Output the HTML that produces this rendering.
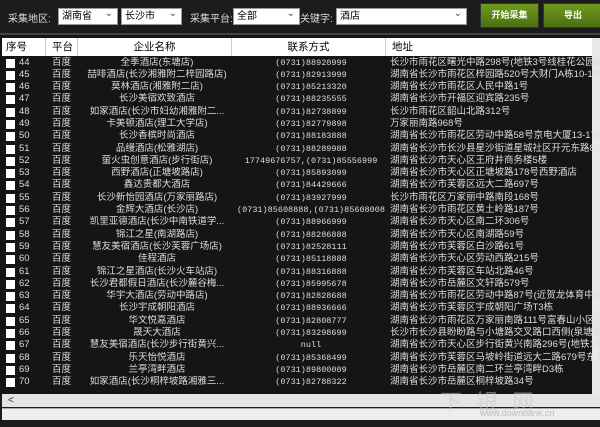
<!DOCTYPE html>
<html><head><meta charset="utf-8"><style>
*{margin:0;padding:0;box-sizing:border-box}
body{width:600px;height:427px;background:#1c1c1c;font-family:"Liberation Sans","Noto Sans CJK SC",sans-serif;font-size:10px;color:#ddd;position:relative;overflow:hidden}
.a{position:absolute}
.sel{background:#fff;color:#000;border:1px solid #999;height:17px;top:8px;font-size:10px;padding:1px 3px;line-height:14px}
.sel:after{content:"⌄";position:absolute;right:4px;top:-2px;color:#555;font-size:10px}
.lbl{top:10px;font-size:10px;color:#ddd}
.btn{top:3px;height:25px;background:linear-gradient(#6f9a1e,#4a7010);border:1px solid #333;color:#fff;font-size:9px;text-align:center;line-height:23px;font-weight:bold}
.hdr{top:38px;left:2px;width:590px;height:18px;background:#fff;color:#000;font-size:10.5px}
.hdr div{position:absolute;top:0;height:18px;line-height:18px;border-right:1px solid #ccc}
.rows{top:56.5px;left:2px;width:590px}
.r{height:12.3px;line-height:12.3px;position:relative;font-size:9.5px;white-space:nowrap}
.r span{position:absolute;top:0}
.cb{left:4px;top:2px!important;width:9px;height:9px;background:#fff}
.n{left:17px}.p{left:50px}.nm{left:78px;width:154px;text-align:center;overflow:hidden}
.ph{left:232px;width:154px;text-align:center;font-family:"Liberation Mono",monospace;font-size:8.5px}
.ad{left:388px}
</style></head><body>
<div class="a" style="left:0;top:33px;width:600px;height:2px;background:#444"></div>
<div class="a lbl" style="left:8px">采集地区:</div>
<div class="a sel" style="left:58px;width:60px">湖南省</div>
<div class="a sel" style="left:121px;width:61px">长沙市</div>
<div class="a lbl" style="left:190px">采集平台:</div>
<div class="a sel" style="left:233px;width:67px">全部</div>
<div class="a lbl" style="left:300px">关键字:</div>
<div class="a sel" style="left:336px;width:131px">酒店</div>
<div class="a btn" style="left:480px;width:59px">开始采集</div>
<div class="a btn" style="left:543px;width:60px">导出</div>
<div class="a" style="left:0;top:35px;width:600px;height:360px;background:#151515"></div>
<div class="a hdr">
<div style="left:0;width:44px;padding-left:4px">序号</div>
<div style="left:44px;width:32px;padding-left:6px">平台</div>
<div style="left:76px;width:154px;text-align:center">企业名称</div>
<div style="left:230px;width:154px;text-align:center">联系方式</div>
<div style="left:384px;width:206px;padding-left:6px;border:none">地址</div>
</div>
<div class="a" style="left:592px;top:38px;width:8px;height:357px;background:#e8e8e8"></div>
<div class="a rows">
<div class="r"><span class="cb"></span><span class="n">44</span><span class="p">百度</span><span class="nm">全季酒店(东塘店)</span><span class="ph">(0731)88920999</span><span class="ad">长沙市雨花区曙光中路298号(地铁3号线桂花公园站</span></div>
<div class="r"><span class="cb"></span><span class="n">45</span><span class="p">百度</span><span class="nm">喆啡酒店(长沙湘雅附二梓园路店)</span><span class="ph">(0731)82913999</span><span class="ad">湖南省长沙市雨花区梓园路520号大财门A栋10-14层</span></div>
<div class="r"><span class="cb"></span><span class="n">46</span><span class="p">百度</span><span class="nm">莫林酒店(湘雅附二店)</span><span class="ph">(0731)85213320</span><span class="ad">湖南省长沙市雨花区人民中路1号</span></div>
<div class="r"><span class="cb"></span><span class="n">47</span><span class="p">百度</span><span class="nm">长沙美宿欢致酒店</span><span class="ph">(0731)88235555</span><span class="ad">湖南省长沙市开福区迎宾路235号</span></div>
<div class="r"><span class="cb"></span><span class="n">48</span><span class="p">百度</span><span class="nm">如家酒店(长沙市妇幼湘雅附二...</span><span class="ph">(0731)82738899</span><span class="ad">长沙市雨花区韶山北路312号</span></div>
<div class="r"><span class="cb"></span><span class="n">49</span><span class="p">百度</span><span class="nm">卡美顿酒店(理工大学店)</span><span class="ph">(0731)82779898</span><span class="ad">万家丽南路968号</span></div>
<div class="r"><span class="cb"></span><span class="n">50</span><span class="p">百度</span><span class="nm">长沙香槟时尚酒店</span><span class="ph">(0731)88183888</span><span class="ad">湖南省长沙市雨花区劳动中路58号京电大厦13-17楼</span></div>
<div class="r"><span class="cb"></span><span class="n">51</span><span class="p">百度</span><span class="nm">品缦酒店(松雅湖店)</span><span class="ph">(0731)88289988</span><span class="ad">湖南省长沙市长沙县星沙街道星城社区开元东路87</span></div>
<div class="r"><span class="cb"></span><span class="n">52</span><span class="p">百度</span><span class="nm">萤火虫创意酒店(步行街店)</span><span class="ph">17749676757,(0731)85556999</span><span class="ad">湖南省长沙市天心区王府井商务楼5楼</span></div>
<div class="r"><span class="cb"></span><span class="n">53</span><span class="p">百度</span><span class="nm">西野酒店(正塘坡路店)</span><span class="ph">(0731)85893099</span><span class="ad">湖南省长沙市天心区正塘坡路178号西野酒店</span></div>
<div class="r"><span class="cb"></span><span class="n">54</span><span class="p">百度</span><span class="nm">鑫达贵都大酒店</span><span class="ph">(0731)84429666</span><span class="ad">湖南省长沙市芙蓉区远大二路697号</span></div>
<div class="r"><span class="cb"></span><span class="n">55</span><span class="p">百度</span><span class="nm">长沙新怡园酒店(万家丽路店)</span><span class="ph">(0731)83927999</span><span class="ad">长沙市雨花区万家丽中路南段168号</span></div>
<div class="r"><span class="cb"></span><span class="n">56</span><span class="p">百度</span><span class="nm">金辉大酒店(长沙店)</span><span class="ph">(0731)85608888,(0731)85608008</span><span class="ad">湖南省长沙市雨花区黄土岭路187号</span></div>
<div class="r"><span class="cb"></span><span class="n">57</span><span class="p">百度</span><span class="nm">凯里亚德酒店(长沙中南铁道学...</span><span class="ph">(0731)88966999</span><span class="ad">湖南省长沙市天心区南二环306号</span></div>
<div class="r"><span class="cb"></span><span class="n">58</span><span class="p">百度</span><span class="nm">锦江之星(南湖路店)</span><span class="ph">(0731)88286888</span><span class="ad">湖南省长沙市天心区南湖路59号</span></div>
<div class="r"><span class="cb"></span><span class="n">59</span><span class="p">百度</span><span class="nm">慧友美宿酒店(长沙芙蓉广场店)</span><span class="ph">(0731)82528111</span><span class="ad">湖南省长沙市芙蓉区白沙路61号</span></div>
<div class="r"><span class="cb"></span><span class="n">60</span><span class="p">百度</span><span class="nm">佳程酒店</span><span class="ph">(0731)85118888</span><span class="ad">湖南省长沙市天心区劳动西路215号</span></div>
<div class="r"><span class="cb"></span><span class="n">61</span><span class="p">百度</span><span class="nm">锦江之星酒店(长沙火车站店)</span><span class="ph">(0731)88316888</span><span class="ad">湖南省长沙市芙蓉区车站北路46号</span></div>
<div class="r"><span class="cb"></span><span class="n">62</span><span class="p">百度</span><span class="nm">长沙君都假日酒店(长沙麓谷梅...</span><span class="ph">(0731)85995678</span><span class="ad">湖南省长沙市岳麓区文轩路579号</span></div>
<div class="r"><span class="cb"></span><span class="n">63</span><span class="p">百度</span><span class="nm">华宇大酒店(劳动中路店)</span><span class="ph">(0731)82828688</span><span class="ad">湖南省长沙市雨花区劳动中路87号(近贺龙体育中心</span></div>
<div class="r"><span class="cb"></span><span class="n">64</span><span class="p">百度</span><span class="nm">长沙宇成朝阳酒店</span><span class="ph">(0731)88936666</span><span class="ad">湖南省长沙市芙蓉区宇成朝阳广场T3栋</span></div>
<div class="r"><span class="cb"></span><span class="n">65</span><span class="p">百度</span><span class="nm">华文悦嘉酒店</span><span class="ph">(0731)82808777</span><span class="ad">湖南省长沙市雨花区万家丽南路111号富春山小区7栋</span></div>
<div class="r"><span class="cb"></span><span class="n">66</span><span class="p">百度</span><span class="nm">晟天大酒店</span><span class="ph">(0731)83298699</span><span class="ad">长沙市长沙县盼盼路与小塘路交叉路口西侧(泉塘安</span></div>
<div class="r"><span class="cb"></span><span class="n">67</span><span class="p">百度</span><span class="nm">慧友美宿酒店(长沙步行街黄兴...</span><span class="ph">null</span><span class="ad">湖南省长沙市天心区步行街黄兴南路296号(地铁1号</span></div>
<div class="r"><span class="cb"></span><span class="n">68</span><span class="p">百度</span><span class="nm">乐天怡悦酒店</span><span class="ph">(0731)85368499</span><span class="ad">湖南省长沙市芙蓉区马坡岭街道远大二路679号东业</span></div>
<div class="r"><span class="cb"></span><span class="n">69</span><span class="p">百度</span><span class="nm">兰亭湾畔酒店</span><span class="ph">(0731)89800009</span><span class="ad">湖南省长沙市岳麓区南二环兰亭湾畔D3栋</span></div>
<div class="r"><span class="cb"></span><span class="n">70</span><span class="p">百度</span><span class="nm">如家酒店(长沙桐梓坡路湘雅三...</span><span class="ph">(0731)82788322</span><span class="ad">湖南省长沙市岳麓区桐梓坡路34号</span></div>
</div>
<div class="a" style="left:2px;top:394px;width:598px;height:13px;background:#e4e4e4;color:#333;font-size:10px;padding-left:6px;line-height:13px">&lt;</div>
<div class="a" style="left:2px;top:408px;width:598px;height:12px;background:#eee;border-top:1px solid #aaa"></div>
<div class="a" style="left:440px;top:385px;font-size:22px;color:rgba(200,200,200,.5);letter-spacing:14px">下银网</div>
<div class="a" style="left:480px;top:408px;font-size:9px;color:#bbb">www.downbank.cn</div>
</body></html>
